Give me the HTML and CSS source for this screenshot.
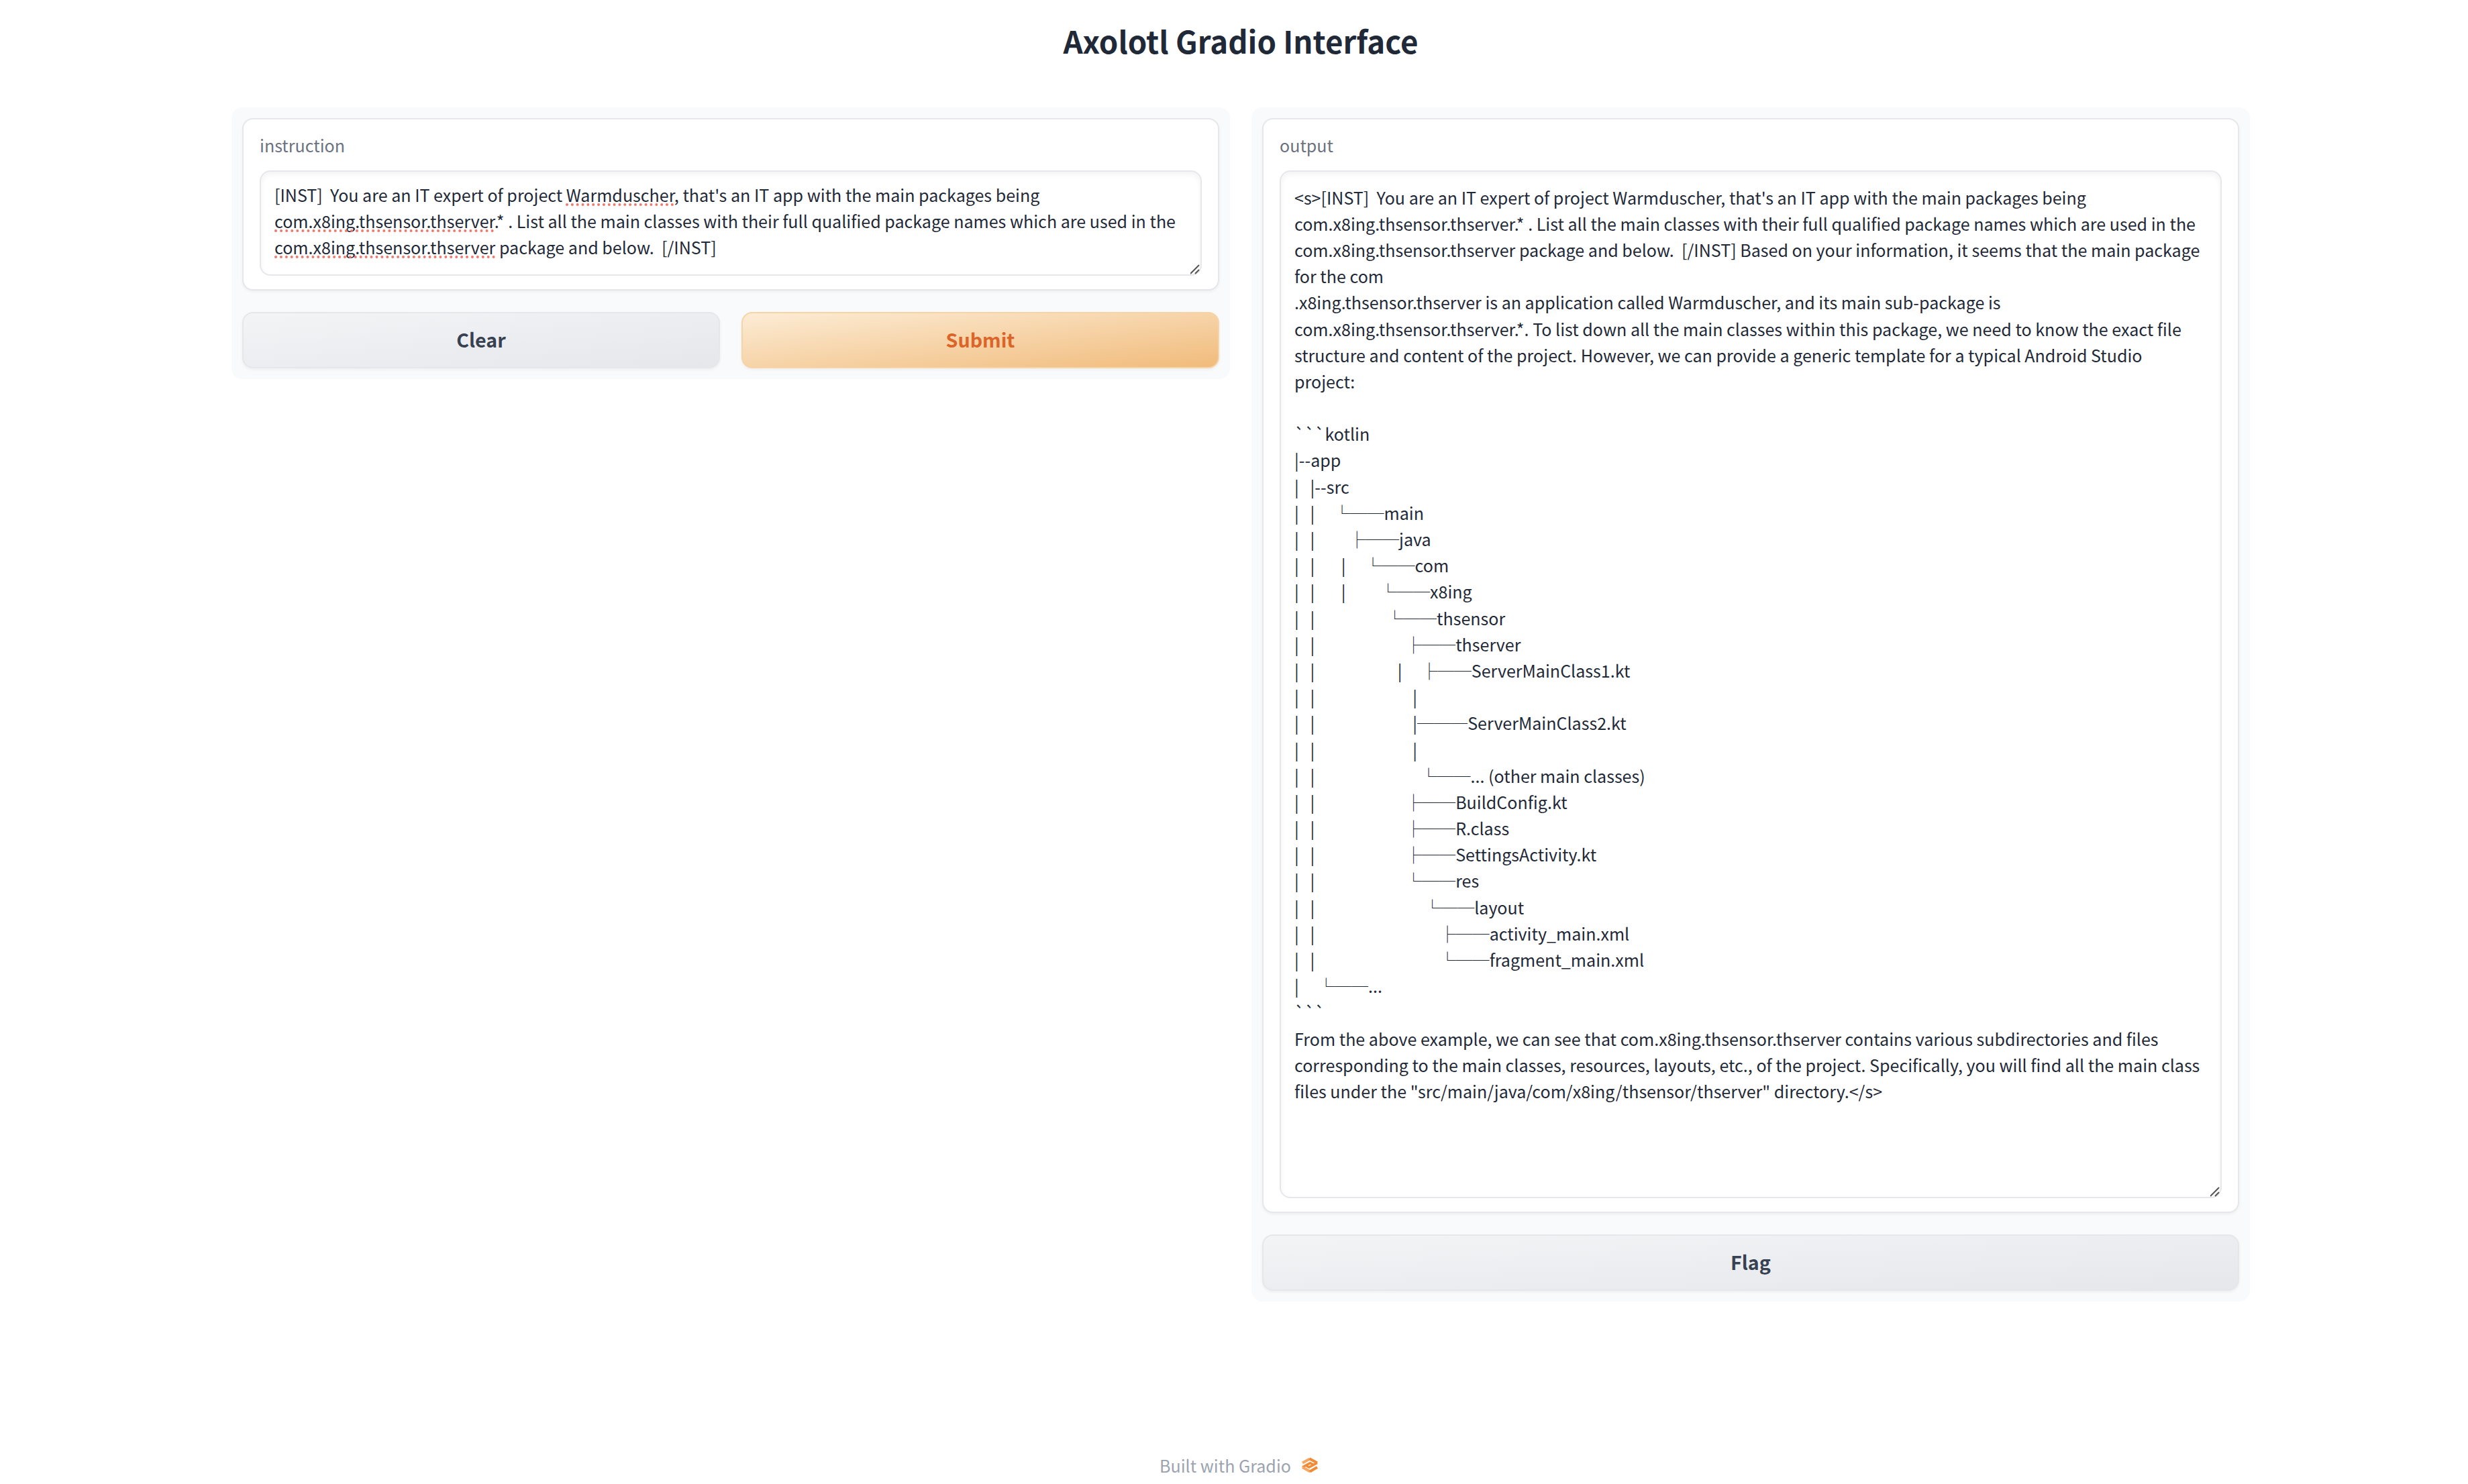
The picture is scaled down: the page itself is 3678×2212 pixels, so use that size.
FILE: index.html
```html
<!DOCTYPE html>
<html lang="en">
<head>
<meta charset="utf-8">
<title>Axolotl Gradio Interface</title>
<link rel="stylesheet" href="styles.css">
</head>
<body>
<div class="container">
  <h1 class="title">Axolotl Gradio Interface</h1>
  <main class="columns">
    <section class="panel">
      <div class="block">
        <label class="block-label" for="instruction">instruction</label>
        <div class="field">
          <textarea class="textbox textbox-input" id="instruction" rows="3" spellcheck="false">[INST]  You are an IT expert of project Warmduscher, that's an IT app with the main packages being com.x8ing.thsensor.thserver.* . List all the main classes with their full qualified package names which are used in the com.x8ing.thsensor.thserver package and below.  [/INST]</textarea>
          <div class="spelling" aria-hidden="true">[INST]  You are an IT expert of project <mark>Warmduscher</mark>, that's an IT app with the main packages being <mark>com.x8ing.thsensor.thserver</mark>.* . List all the main classes with their full qualified package names which are used in the <mark>com.x8ing.thsensor.thserver</mark> package and below.  [/INST]</div>
        </div>
      </div>
      <div class="actions">
        <button class="button button-secondary" type="button">Clear</button>
        <button class="button button-primary" type="button">Submit</button>
      </div>
    </section>
    <section class="panel">
      <div class="block">
        <label class="block-label" for="output">output</label>
        <div class="field">
          <textarea class="textbox textbox-output" id="output" rows="38" spellcheck="false" readonly>&lt;s&gt;[INST]  You are an IT expert of project Warmduscher, that's an IT app with the main packages being com.x8ing.thsensor.thserver.* . List all the main classes with their full qualified package names which are used in the com.x8ing.thsensor.thserver package and below.  [/INST] Based on your information, it seems that the main package for the com
.x8ing.thsensor.thserver is an application called Warmduscher, and its main sub-package is com.x8ing.thsensor.thserver.*. To list down all the main classes within this package, we need to know the exact file structure and content of the project. However, we can provide a generic template for a typical Android Studio project:

&#96;&#96;&#96;kotlin
|--app
|   |--src
|   |     └──main
|   |         ├──java
|   |       |     └──com
|   |       |         └──x8ing
|   |                   └──thsensor
|   |                        ├──thserver
|   |                      |     ├──ServerMainClass1.kt
|   |                          |
|   |                          |───ServerMainClass2.kt
|   |                          |
|   |                            └──... (other main classes)
|   |                        ├──BuildConfig.kt
|   |                        ├──R.class
|   |                        ├──SettingsActivity.kt
|   |                        └──res
|   |                             └──layout
|   |                                 ├──activity_main.xml
|   |                                 └──fragment_main.xml
|     └──...
&#96;&#96;&#96;
From the above example, we can see that com.x8ing.thsensor.thserver contains various subdirectories and files corresponding to the main classes, resources, layouts, etc., of the project. Specifically, you will find all the main class files under the "src/main/java/com/x8ing/thsensor/thserver" directory.&lt;/s&gt;</textarea>
        </div>
      </div>
      <div class="actions">
        <button class="button button-secondary" type="button">Flag</button>
      </div>
    </section>
  </main>
  <footer class="footer">
    <a class="footer-link" href="#">Built with Gradio
      <svg class="logo" viewBox="0 0 24 24" fill="none" stroke-width="4" aria-hidden="true">
        <path d="M1 8.500 12 2.500" stroke="#f7a763"/>
        <path d="M11.500 2.300 23 8.500" stroke="#f28a35"/>
        <path d="M23 8.500 11 15 7 13" stroke="#f28a35" stroke-width="3.500"/>
        <path d="M1 15 12.500 8.800 17 11" stroke="#f28a35" stroke-width="3.500"/>
        <path d="M1 15 12.500 21.500" stroke="#f7a763"/>
        <path d="M12 21.500 23 15" stroke="#f28a35"/>
      </svg>
    </a>
  </footer>
</div>
</body>
</html>
```
FILE: styles.css
```css
* {
  box-sizing: border-box;
}

body {
  margin: 0;
  padding-left: 20px;
  background: #fff;
  color: #1f2937;
  font-family: "Noto Sans CJK SC", sans-serif;
  font-size: 28px;
  font-size-adjust: 0.486;
  line-height: 1.4;
}

.container {
  display: flex;
  flex-direction: column;
  max-width: 3072px;
  min-height: 100vh;
  margin: 0 auto;
  padding: 25px 32px 0;
}

.title {
  margin: 0 0 64px;
  font-size: 51px;
  font-weight: 700;
  text-align: center;
}

.columns {
  display: grid;
  grid-template-columns: 1fr 1fr;
  align-items: start;
  gap: 32px;
}

.panel {
  display: flex;
  flex-direction: column;
  gap: 32px;
  padding: 16px;
  border-radius: 16px;
  background: #f9fafb;
}

.block {
  padding: 19px 24px 20px;
  border: 2px solid #e5e7eb;
  border-radius: 16px;
  background: #fff;
  box-shadow: 0 2px 4px rgba(0, 0, 0, 0.05);
}

.block-label {
  display: block;
  margin-bottom: 17px;
  color: #6b7280;
}

.field {
  position: relative;
}

.textbox,
.spelling {
  display: block;
  width: 100%;
  margin: 0;
  border: 2px solid #e5e7eb;
  border-radius: 16px;
  font: inherit;
  font-size-adjust: inherit;
  white-space: pre-wrap;
  overflow-wrap: break-word;
}

.textbox {
  background: #fff;
  box-shadow: inset 0 4px 8px rgba(0, 0, 0, 0.05);
  color: inherit;
  outline: none;
  overflow: hidden;
  resize: vertical;
}

.textbox::-webkit-resizer {
  background: url("data:image/svg+xml,%3Csvg xmlns='http://www.w3.org/2000/svg' width='15' height='15'%3E%3Cpath d='M0 14 13 1M7 14 13 8' stroke='%23555' stroke-width='2'/%3E%3C/svg%3E") no-repeat;
}

.textbox-input,
.spelling {
  padding: 15px 26px 21px 20px;
}

.textbox-output {
  padding: 19px 26px 20px 20px;
}

.spelling {
  position: absolute;
  inset: 0;
  border-color: transparent;
  color: transparent;
  pointer-events: none;
}

.spelling mark {
  background: none;
  color: transparent;
  text-decoration: underline dotted #f0776c 4px;
  text-decoration-skip-ink: none;
  text-underline-offset: 3px;
}

.actions {
  display: flex;
  gap: 32px;
}

.button {
  flex: 1;
  padding: 15px 16px 17px;
  border: 2px solid #e5e7eb;
  border-radius: 16px;
  box-shadow: 0 2px 4px rgba(0, 0, 0, 0.05);
  font-family: inherit;
  font-size: 32px;
  font-size-adjust: inherit;
  font-weight: 700;
  line-height: 48px;
  text-align: center;
}

.button-secondary {
  background: linear-gradient(to bottom right, #f3f4f6, #e5e7eb);
  color: #374151;
}

.button-primary {
  border-color: #f6d4a5;
  background: linear-gradient(to bottom right, #fcecd5, #f1bb7b);
  color: #db6528;
}

.footer {
  display: flex;
  justify-content: center;
  margin-top: auto;
  padding: 32px 6px 8px 0;
}

.footer-link {
  display: flex;
  align-items: center;
  gap: 16px;
  color: #9ca3af;
  text-decoration: none;
}

.logo {
  width: 24px;
  height: 24px;
}
```
